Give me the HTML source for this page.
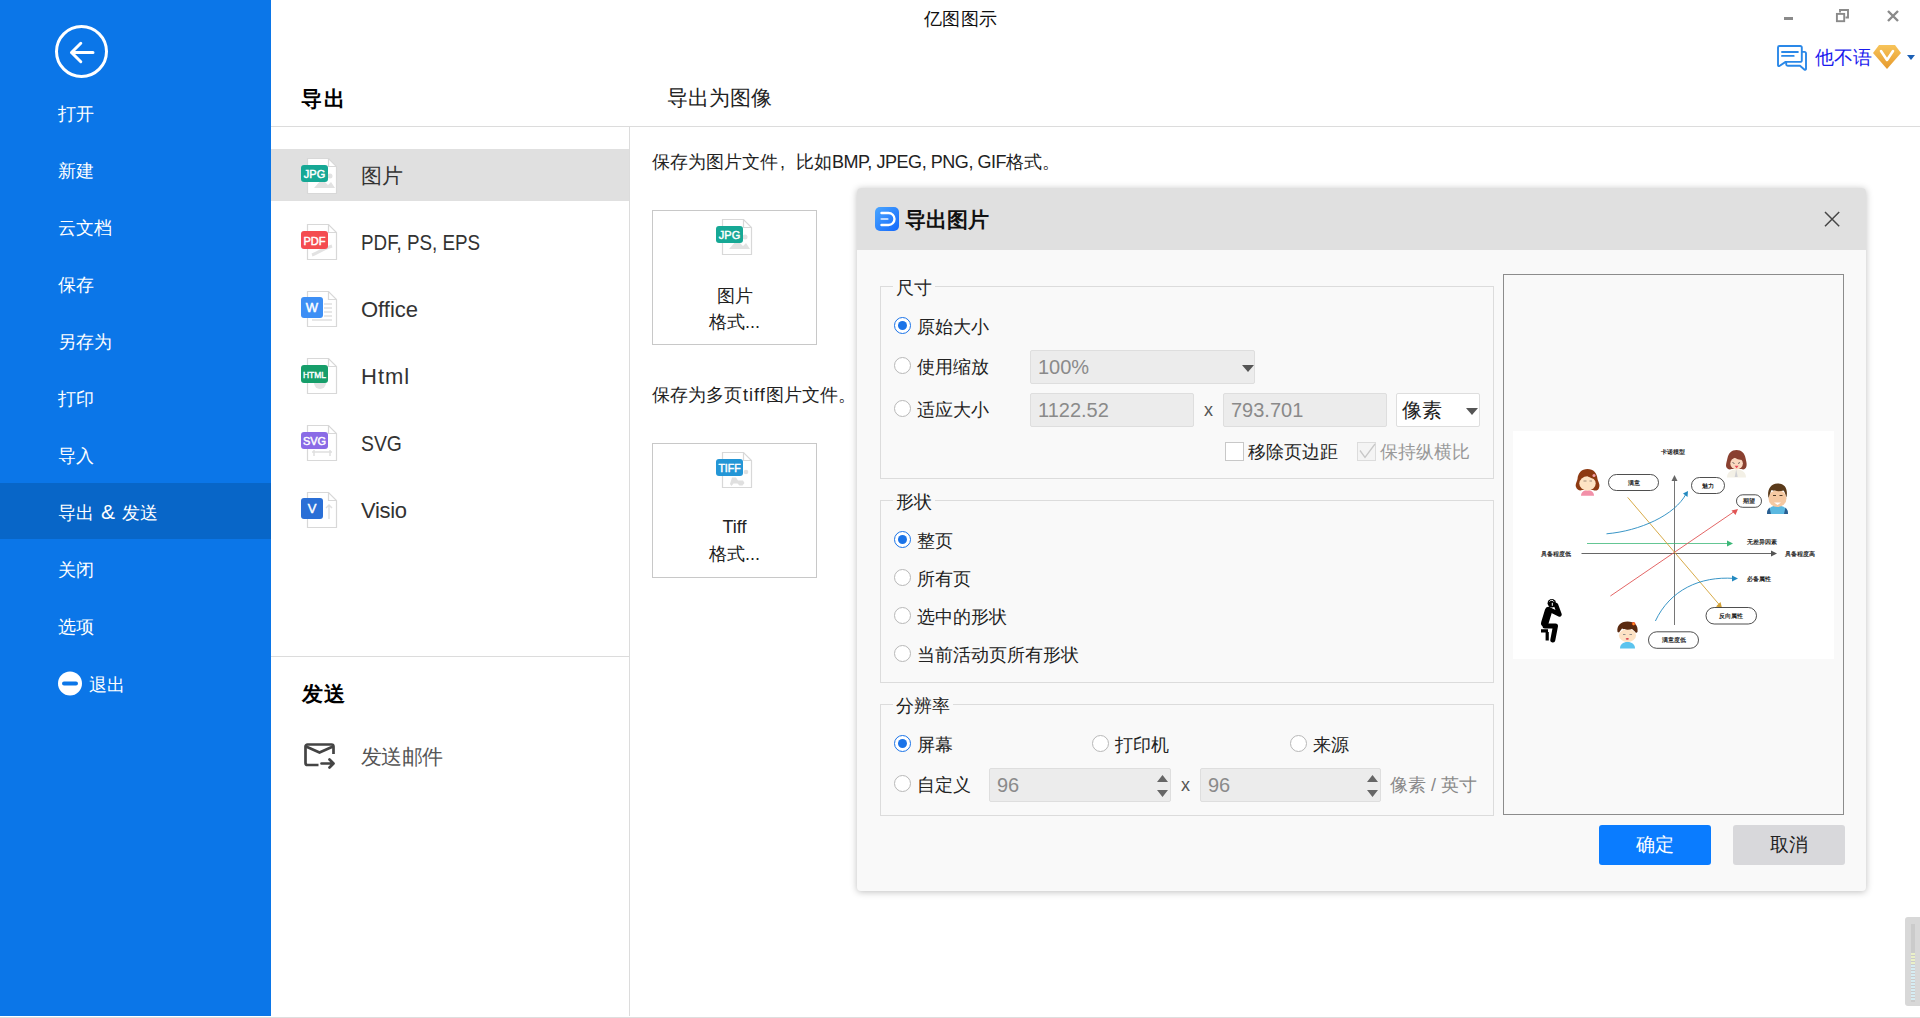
<!DOCTYPE html>
<html><head><meta charset="utf-8">
<style>
*{margin:0;padding:0;box-sizing:border-box}
html,body{width:1920px;height:1018px;overflow:hidden;background:#fff;font-family:"Liberation Sans",sans-serif;color:#222}
.a{position:absolute;white-space:nowrap}
#side{position:absolute;left:0;top:0;width:271px;height:1016px;background:#0b76e8}
.mi{position:absolute;left:58px;color:#fff;font-size:18px;line-height:24px;white-space:nowrap}
#hl{position:absolute;left:0;top:483px;width:271px;height:56px;background:#0866c8}
.hline{position:absolute;height:1px;background:#dcdcdc}
.vline{position:absolute;width:1px;background:#dcdcdc}
.li{position:absolute;left:361px;font-size:21px;line-height:28px;color:#333}
.box{position:absolute;border:1px solid #c8c8c8;background:#fff}
.dlg{position:absolute;left:857px;top:188px;width:1009px;height:703px;background:#f9f9f9;border-radius:4px;box-shadow:0 1px 7px rgba(0,0,0,.26);overflow:hidden}
.dhead{position:absolute;left:0;top:0;width:100%;height:62px;background:#e0e0e0}
.grp{position:absolute;border:1px solid #dcdcdc}
.glab{position:absolute;background:#f9f9f9;font-size:18px;line-height:22px;padding:0 3px;color:#222}
.t{position:absolute;white-space:nowrap;font-size:18px;line-height:22px;color:#222}
.rad{position:absolute;width:17px;height:17px;border-radius:50%;border:1px solid #b8b8b8;background:#fff}
.rad.on{border:1.5px solid #1a73e8}
.rad.on::after{content:"";position:absolute;left:2.5px;top:2.5px;width:9px;height:9px;border-radius:50%;background:#1a73e8}
.inp{position:absolute;background:#ececec;border:1px solid #dedede;border-radius:2px;font-size:20px;line-height:33px;color:#8a8a8a;padding-left:7px}
.btn{position:absolute;border-radius:3px;font-size:19px;text-align:center;line-height:40px}
</style></head><body>
<!-- sidebar -->
<div id="side">
  <svg class="a" style="left:54px;top:24px" width="56" height="56" viewBox="0 0 56 56">
    <circle cx="27.5" cy="27.5" r="25" fill="none" stroke="#fff" stroke-width="3"/>
    <path d="M17.5 28.5h21.5M26.8 19.3l-9.3 9.2 9.3 9.2" fill="none" stroke="#fff" stroke-width="3" stroke-linecap="round" stroke-linejoin="round"/>
  </svg>
  <div id="hl"></div>
  <div class="mi" style="top:102px">打开</div>
  <div class="mi" style="top:159px">新建</div>
  <div class="mi" style="top:216px">云文档</div>
  <div class="mi" style="top:273px">保存</div>
  <div class="mi" style="top:330px">另存为</div>
  <div class="mi" style="top:387px">打印</div>
  <div class="mi" style="top:444px">导入</div>
  <div class="mi" style="top:501px;word-spacing:2px">导出 <span style="font-size:21px;line-height:20px">&amp;</span> 发送</div>
  <div class="mi" style="top:558px">关闭</div>
  <div class="mi" style="top:615px">选项</div>
  <svg class="a" style="left:57px;top:671px" width="26" height="26" viewBox="0 0 26 26"><circle cx="13" cy="12.5" r="12" fill="#fff"/><rect x="5" y="10.5" width="16" height="4" rx="2" fill="#0b76e8"/></svg>
  <div class="mi" style="top:673px;left:89px">退出</div>
</div>
<div class="a" style="left:0;top:1017px;width:1920px;height:1px;background:#dedede"></div>

<!-- title bar -->
<div class="a" style="left:924px;top:8px;font-size:18px;line-height:22px;color:#111;letter-spacing:0.4px">亿图图示</div>
<div class="a" style="left:1784px;top:17px;width:9px;height:3px;background:#8a8a8a"></div>
<svg class="a" style="left:1834px;top:7px" width="16" height="17" viewBox="0 0 16 17"><path d="M6 5.5V3h8v7.5h-2.5" fill="none" stroke="#8a8a8a" stroke-width="1.9"/><rect x="2.9" y="6.9" width="7.3" height="7.3" fill="#fff" stroke="#8a8a8a" stroke-width="1.9"/></svg>
<svg class="a" style="left:1886px;top:9px" width="14" height="14" viewBox="0 0 14 14"><path d="M2 2l10 10M12 2L2 12" stroke="#8a8a8a" stroke-width="2.4"/></svg>

<!-- user -->
<svg class="a" style="left:1776px;top:44px" width="33" height="29" viewBox="0 0 33 29"><g fill="none" stroke="#2a88e8" stroke-width="1.9" stroke-linecap="round" stroke-linejoin="round"><path d="M25.8 16.4V3.5A1.5 1.5 0 0 0 24.3 2H3.5A1.5 1.5 0 0 0 2 3.5V21.3a0.9 0.9 0 0 0 1.4 0.7L9.6 17.9H24.3a1.5 1.5 0 0 0 1.5-1.5z"/><path d="M6 8h15.9M6 11.9h11.7"/><path d="M26 7.9h2.5A1.5 1.5 0 0 1 30 9.4V25a0.9 0.9 0 0 1-1.4 0.7L24 21.8H11.7a1.5 1.5 0 0 1-1.5-1.5V18.3"/></g></svg>
<div class="a" style="left:1815px;top:47px;font-size:19px;line-height:22px;color:#1a1aee">他不语</div>
<svg class="a" style="left:1872px;top:44px" width="30" height="26" viewBox="0 0 30 26"><defs><linearGradient id="gd" x1="0" y1="0" x2="0" y2="1"><stop offset="0" stop-color="#f7c45a"/><stop offset="1" stop-color="#e6992c"/></linearGradient></defs><path d="M7 1h16l6 8-14 16L1 9z" fill="url(#gd)"/><path d="M9 7l6 9 6-9" fill="none" stroke="#fff" stroke-width="2.6" stroke-linecap="round" stroke-linejoin="round"/></svg>
<svg class="a" style="left:1907px;top:55px" width="8" height="5" viewBox="0 0 8 5"><path d="M0 0h8L4 5z" fill="#1b5fb5"/></svg>

<!-- export header -->
<div class="a" style="left:301px;top:86px;font-size:21px;line-height:26px;font-weight:bold;color:#000;letter-spacing:1.5px">导出</div>
<div class="a" style="left:667px;top:85px;font-size:21px;line-height:26px;color:#222">导出为图像</div>
<div class="hline" style="left:271px;top:126px;width:1649px"></div>
<div class="vline" style="left:629px;top:127px;height:889px"></div>
<div class="a" style="left:271px;top:149px;width:358px;height:52px;background:#e0e0e0"></div>
<div class="hline" style="left:271px;top:656px;width:358px"></div>
<!-- file list -->
<svg class="a" style="left:300px;top:157px" width="40" height="40" viewBox="0 0 40 40"><path d="M7.5 1.5h21l8 8v27h-29z" fill="#fff" stroke="#d8d8d8" stroke-width="1.2"/><path d="M28.5 1.5v8h8" fill="none" stroke="#d8d8d8" stroke-width="1.2"/><path d="M14 31l8-9 6 6 3-3 4 6z" fill="#e2e2e2"/><circle cx="30" cy="19" r="2.5" fill="#e2e2e2"/><rect x="1" y="8" width="27" height="17" rx="3" fill="#16a895"/><text x="14.5" y="21" font-size="11" font-family="Liberation Sans" fill="#fff" stroke="#fff" stroke-width="0.45" text-anchor="middle">JPG</text></svg>
<div class="li" style="top:162px">图片</div>

<svg class="a" style="left:300px;top:223px" width="40" height="40" viewBox="0 0 40 40"><path d="M7.5 1.5h21l8 8v27h-29z" fill="#fff" stroke="#d8d8d8" stroke-width="1.2"/><path d="M28.5 1.5v8h8" fill="none" stroke="#d8d8d8" stroke-width="1.2"/><path d="M12 32c6-2 10-6 20-9" fill="none" stroke="#e2e2e2" stroke-width="3"/><rect x="1" y="8" width="27" height="18" rx="3" fill="#f44c50"/><text x="14.5" y="21.5" font-size="11" font-family="Liberation Sans" fill="#fff" stroke="#fff" stroke-width="0.45" text-anchor="middle">PDF</text></svg>
<div class="li" style="top:229px;font-size:22px;transform:scaleX(.855);transform-origin:0 0">PDF, PS, EPS</div>

<svg class="a" style="left:300px;top:290px" width="40" height="40" viewBox="0 0 40 40"><path d="M7.5 1.5h21l8 8v27h-29z" fill="#fff" stroke="#d8d8d8" stroke-width="1.2"/><path d="M28.5 1.5v8h8" fill="none" stroke="#d8d8d8" stroke-width="1.2"/><path d="M24 14h8M24 18h8M24 22h8M24 26h8M12 30h20" stroke="#e0e0e0" stroke-width="1.5"/><rect x="1" y="7" width="22" height="21" rx="3" fill="#3d8ff5"/><text x="12" y="22" font-size="13" font-family="Liberation Sans" fill="#fff" stroke="#fff" stroke-width="0.45" text-anchor="middle">W</text></svg>
<div class="li" style="top:296px;font-size:22px">Office</div>

<svg class="a" style="left:300px;top:357px" width="40" height="40" viewBox="0 0 40 40"><path d="M7.5 1.5h21l8 8v27h-29z" fill="#fff" stroke="#d8d8d8" stroke-width="1.2"/><path d="M28.5 1.5v8h8" fill="none" stroke="#d8d8d8" stroke-width="1.2"/><circle cx="20" cy="26" r="6" fill="#e4e4e4"/><rect x="1" y="8" width="27" height="18" rx="3" fill="#169e6a"/><text x="14.5" y="20.5" font-size="9.5" font-family="Liberation Sans" fill="#fff" stroke="#fff" stroke-width="0.45" text-anchor="middle" textLength="23" lengthAdjust="spacingAndGlyphs">HTML</text></svg>
<div class="li" style="top:363px;font-size:22px;letter-spacing:1px">Html</div>

<svg class="a" style="left:300px;top:424px" width="40" height="40" viewBox="0 0 40 40"><path d="M7.5 1.5h21l8 8v27h-29z" fill="#fff" stroke="#d8d8d8" stroke-width="1.2"/><path d="M28.5 1.5v8h8" fill="none" stroke="#d8d8d8" stroke-width="1.2"/><path d="M12 28h20M14 26v6M30 26v6" stroke="#e0e0e0" stroke-width="1.5"/><rect x="1" y="8" width="27" height="17" rx="3" fill="#8a6be6"/><text x="14.5" y="20.5" font-size="11" font-family="Liberation Sans" fill="#fff" stroke="#fff" stroke-width="0.45" text-anchor="middle">SVG</text></svg>
<div class="li" style="top:430px;font-size:22px;transform:scaleX(.88);transform-origin:0 0">SVG</div>

<svg class="a" style="left:300px;top:491px" width="40" height="40" viewBox="0 0 40 40"><path d="M7.5 1.5h21l8 8v27h-29z" fill="#fff" stroke="#d8d8d8" stroke-width="1.2"/><path d="M28.5 1.5v8h8" fill="none" stroke="#d8d8d8" stroke-width="1.2"/><path d="M29 14v14M26 17l3-3 3 3" fill="none" stroke="#e0e0e0" stroke-width="1.5"/><rect x="1" y="7" width="22" height="21" rx="3" fill="#2a6fd6"/><text x="12" y="22" font-size="13" font-family="Liberation Sans" fill="#fff" stroke="#fff" stroke-width="0.45" text-anchor="middle">V</text></svg>
<div class="li" style="top:497px;font-size:22px;letter-spacing:-0.3px">Visio</div>

<div class="a" style="left:302px;top:681px;font-size:21px;line-height:26px;font-weight:bold;color:#000;letter-spacing:0.5px">发送</div>
<svg class="a" style="left:302px;top:741px" width="36" height="30" viewBox="0 0 36 30"><path d="M16.5 24H5.5a2 2 0 0 1-2-2V5.5a2 2 0 0 1 2-2h24a2 2 0 0 1 2 2V13" fill="none" stroke="#444" stroke-width="2.7"/><path d="M4 5.5l13.5 6 13.5-6" fill="none" stroke="#444" stroke-width="2.7"/><path d="M19.5 22.5H31M27.5 18.5l4 4-4 4" fill="none" stroke="#444" stroke-width="2.7" stroke-linecap="round" stroke-linejoin="round"/></svg>
<div class="li" style="top:743px;color:#555;letter-spacing:-0.7px">发送邮件</div>

<!-- right content -->
<div class="a" style="left:652px;top:151px;font-size:18px;line-height:22px;color:#222">保存为图片文件<span style="display:inline-block;width:18px;padding-left:2px">,</span>比如<span style="letter-spacing:-0.45px">BMP, JPEG, PNG, GIF</span>格式。</div>
<div class="box" style="left:652px;top:210px;width:165px;height:135px">
  <svg class="a" style="left:62px;top:7px" width="40" height="40" viewBox="0 0 40 40"><path d="M7.5 1.5h21l8 8v27h-29z" fill="#fff" stroke="#d8d8d8" stroke-width="1.2"/><path d="M28.5 1.5v8h8" fill="none" stroke="#d8d8d8" stroke-width="1.2"/><path d="M14 31l8-9 6 6 3-3 4 6z" fill="#e2e2e2"/><circle cx="30" cy="19" r="2.5" fill="#e2e2e2"/><rect x="1" y="8" width="27" height="17" rx="3" fill="#16a895"/><text x="14.5" y="21" font-size="11" font-family="Liberation Sans" fill="#fff" stroke="#fff" stroke-width="0.45" text-anchor="middle">JPG</text></svg>
  <div class="a" style="left:0;width:163px;top:72px;text-align:center;font-size:18px;line-height:26px;color:#222;white-space:normal">图片<br>格式...</div>
</div>
<div class="a" style="left:652px;top:384px;font-size:18px;line-height:22px;color:#222">保存为多页<span style="letter-spacing:1px;padding-left:1px">tiff</span>图片文件。</div>
<div class="box" style="left:652px;top:443px;width:165px;height:135px">
  <svg class="a" style="left:62px;top:7px" width="40" height="40" viewBox="0 0 40 40"><path d="M7.5 1.5h21l8 8v27h-29z" fill="#fff" stroke="#d8d8d8" stroke-width="1.2"/><path d="M28.5 1.5v8h8" fill="none" stroke="#d8d8d8" stroke-width="1.2"/><path d="M17 26.5h4l2 3h5l1.5 2.5-2 2.5h-3l-2-2h-4l-2 2.5-1.5-2z" fill="#e0e0e0"/><circle cx="31" cy="21" r="2.3" fill="#e0e0e0"/><rect x="1" y="8" width="27" height="17" rx="3" fill="#2496d6"/><text x="14.5" y="21" font-size="10.5" font-family="Liberation Sans" fill="#fff" stroke="#fff" stroke-width="0.45" text-anchor="middle">TIFF</text></svg>
  <div class="a" style="left:0;width:163px;top:70px;text-align:center;font-size:18px;line-height:27px;color:#222;white-space:normal">Tiff<br>格式...</div>
</div>
<!-- dialog -->
<div class="dlg">
  <div class="dhead"></div>
  <svg class="a" style="left:18px;top:19px" width="24" height="24" viewBox="0 0 24 24"><defs><linearGradient id="gi" x1="0" y1="0" x2="1" y2="1"><stop offset="0" stop-color="#4aa6ff"/><stop offset="1" stop-color="#1468fb"/></linearGradient></defs><rect width="24" height="24" rx="5" fill="url(#gi)"/><path d="M6.5 6h7a6 6 0 0 1 0 12h-7" fill="none" stroke="#fff" stroke-width="2.4" stroke-linecap="round"/><path d="M6.5 12h6" stroke="#bcd9ff" stroke-width="2.2" stroke-linecap="round"/></svg>
  <div class="a" style="left:48px;top:19px;font-size:21px;line-height:26px;font-weight:bold;color:#111">导出图片</div>
  <svg class="a" style="left:966px;top:22px" width="18" height="18" viewBox="0 0 18 18"><path d="M2 2l14.2 14.2M16.2 2L2 16.2" stroke="#474747" stroke-width="1.5"/></svg>

  <div class="grp" style="left:23px;top:98px;width:614px;height:193px"></div>
  <div class="glab" style="left:36px;top:89px">尺寸</div>
  <div class="rad on" style="left:37px;top:129px"></div><div class="t" style="left:60px;top:128px">原始大小</div>
  <div class="rad" style="left:37px;top:169px"></div><div class="t" style="left:60px;top:168px">使用缩放</div>
  <div class="rad" style="left:37px;top:212px"></div><div class="t" style="left:60px;top:211px">适应大小</div>
  <div class="inp" style="left:173px;top:162px;width:225px;height:34px">100%<svg class="a" style="left:211px;top:14px" width="12" height="7" viewBox="0 0 12 7"><path d="M0 0h12L6 7z" fill="#555"/></svg></div>
  <div class="inp" style="left:173px;top:205px;width:164px;height:34px">1122.52</div>
  <div class="t" style="left:347px;top:211px;color:#555">x</div>
  <div class="inp" style="left:366px;top:205px;width:164px;height:34px">793.701</div>
  <div class="inp" style="left:539px;top:205px;width:84px;height:34px;background:#fff;color:#222;padding-left:5px">像素<svg class="a" style="left:69px;top:14px" width="12" height="7" viewBox="0 0 12 7"><path d="M0 0h12L6 7z" fill="#555"/></svg></div>
  <div class="a" style="left:368px;top:254px;width:19px;height:19px;border:1px solid #c8c8c8;background:#fff"></div>
  <div class="t" style="left:391px;top:253px">移除页边距</div>
  <div class="a" style="left:500px;top:254px;width:19px;height:19px;border:1px solid #dcdcdc;background:#f4f4f4"><svg class="a" style="left:0;top:0" width="18" height="18" viewBox="0 0 18 18"><path d="M2 7.5L7 14.5L17 1" fill="none" stroke="#c8c8c8" stroke-width="1.3"/></svg></div>
  <div class="t" style="left:523px;top:253px;color:#999">保持纵横比</div>

  <div class="grp" style="left:23px;top:312px;width:614px;height:183px"></div>
  <div class="glab" style="left:36px;top:303px">形状</div>
  <div class="rad on" style="left:37px;top:343px"></div><div class="t" style="left:60px;top:342px">整页</div>
  <div class="rad" style="left:37px;top:381px"></div><div class="t" style="left:60px;top:380px">所有页</div>
  <div class="rad" style="left:37px;top:419px"></div><div class="t" style="left:60px;top:418px">选中的形状</div>
  <div class="rad" style="left:37px;top:457px"></div><div class="t" style="left:60px;top:456px">当前活动页所有形状</div>

  <div class="grp" style="left:23px;top:516px;width:614px;height:112px"></div>
  <div class="glab" style="left:36px;top:507px">分辨率</div>
  <div class="rad on" style="left:37px;top:547px"></div><div class="t" style="left:60px;top:546px">屏幕</div>
  <div class="rad" style="left:235px;top:547px"></div><div class="t" style="left:258px;top:546px">打印机</div>
  <div class="rad" style="left:433px;top:547px"></div><div class="t" style="left:456px;top:546px">来源</div>
  <div class="rad" style="left:37px;top:587px"></div><div class="t" style="left:60px;top:586px">自定义</div>
  <div class="inp" style="left:132px;top:580px;width:182px;height:34px">96<svg class="a" style="left:166px;top:5px" width="13" height="24" viewBox="0 0 13 24"><path d="M1 8L6.5 1 12 8z M1 16l5.5 7 5.5-7z" fill="#666"/></svg></div>
  <div class="t" style="left:324px;top:586px;color:#555">x</div>
  <div class="inp" style="left:343px;top:580px;width:181px;height:34px">96<svg class="a" style="left:165px;top:5px" width="13" height="24" viewBox="0 0 13 24"><path d="M1 8L6.5 1 12 8z M1 16l5.5 7 5.5-7z" fill="#666"/></svg></div>
  <div class="t" style="left:533px;top:586px;color:#888">像素 / 英寸</div>

  <div class="a" style="left:646px;top:86px;width:341px;height:541px;border:1px solid #8c8c8c"></div>
  <div id="prev" class="a" style="left:656px;top:243px;width:321px;height:228px;background:#fff"></div>

  <div class="btn" style="left:742px;top:637px;width:112px;height:40px;background:#0a7cff;color:#fff">确定</div>
  <div class="btn" style="left:876px;top:637px;width:112px;height:40px;background:#d8d8db;color:#222">取消</div>
</div>

<!-- preview -->
<svg class="a" style="left:1510px;top:430px" width="330" height="235" viewBox="0 0 330 235" font-family="Liberation Sans">
<defs>
<marker id="mk" viewBox="0 0 6 6" refX="5" refY="3" markerWidth="5" markerHeight="5" orient="auto"><path d="M0 0L6 3 0 6z" fill="context-stroke"/></marker>
</defs>
<g font-size="6" font-weight="bold" fill="#222">
<text x="151" y="24">卡诺模型</text>
<text x="31" y="126">具备程度低</text>
<text x="275" y="126">具备程度高</text>
<text x="237" y="114">无差异因素</text>
<text x="237" y="151">必备属性</text>
</g>
<path d="M164.5 195V46" stroke="#666" stroke-width="0.9" fill="none"/><path d="M161.5 51l3-6 3 6z" fill="#666"/>
<path d="M71.5 123.5H265" stroke="#555" stroke-width="0.9" fill="none"/><path d="M261 120.5l6 3-6 3z" fill="#555"/>
<path d="M77 113.5H219" stroke="#3cb878" stroke-width="0.8" fill="none"/><path d="M217 110.5l6 3-6 3z" fill="#3cb878"/>
<path d="M100.4 166L225 81" stroke="#e05555" stroke-width="0.9" fill="none"/><path d="M221.5 80.5l6.5-1.5-2.5 6z" fill="#e05555"/>
<path d="M117.7 67.4L210 175.5" stroke="#d2a033" stroke-width="0.9" fill="none"/><path d="M206 176.5l6 1.5-1.5-6z" fill="#d2a033"/>
<path d="M96.5 103.8C130 101 165 85 176 64" stroke="#2389c0" stroke-width="0.9" fill="none"/><path d="M173 63.5l5-2.5-0.5 6z" fill="#2389c0"/>
<path d="M145.4 191C160 160 190 146 224 148.4" stroke="#2389c0" stroke-width="0.9" fill="none"/><path d="M222 145.5l6 3-6 3z" fill="#2389c0"/>
<g fill="#fff" stroke="#222" stroke-width="0.8">
<rect x="98.5" y="44.5" width="50" height="16" rx="8"/>
<rect x="181.5" y="47.5" width="33" height="16" rx="8"/>
<rect x="226.5" y="64.8" width="25" height="12.5" rx="6.2"/>
<rect x="196" y="177.5" width="50.5" height="16.5" rx="8.2"/>
<rect x="138.5" y="201.8" width="50" height="16.5" rx="8.2"/>
</g>
<g font-size="5.5" font-weight="bold" fill="#222" text-anchor="middle">
<text x="123.5" y="54.5">满意</text>
<text x="198" y="57.5">魅力</text>
<text x="239" y="73">期望</text>
<text x="221" y="188">反向属性</text>
<text x="163.5" y="212">满意度低</text>
</g>
<!-- girl left -->
<g>
<path d="M66 57c-1-3 1-5 1.5-8 0.5-6 4-10 10-10s9.5 4 10 10c0.5 3 3 5 1.5 9-1 3-4 3-6 2l-11 0c-2 1-5 0-6-3z" fill="#8e3a12"/>
<path d="M71 65.8c0-3.5 2.5-5.5 6.5-5.5s6.5 2 6.5 5.5z" fill="#f290a8"/>
<ellipse cx="77.5" cy="53.5" rx="8.2" ry="7.2" fill="#fde3c4"/>
<path d="M69 50c1.5-6 5-9 9-9s7 3 8.5 8c-4 0-9-2-12-6c-1 3-3 5-5.5 7z" fill="#8e3a12"/>
<circle cx="84" cy="45.5" r="1.5" fill="#f5a0a8"/>
<path d="M73.5 51h3M79.5 51h2.5" stroke="#8a7a6a" stroke-width="0.8"/>
</g>
<!-- woman top right -->
<g>
<path d="M217 47.4c0-5 3.5-8 9.5-8s9.5 3 9.5 8z" fill="#f3f0e6"/>
<path d="M226.2 39.5l-1.5 7.5h3z" fill="#d0d0d4"/>
<path d="M216 36c0-3 1-5 1.5-8 1-5 4-8 9-8s8 3 9 8c0.5 3 1.5 5 1 8-0.5 3-3 4-5 3h-10c-2 1-5 0-5.5-3z" fill="#8a4030"/>
<ellipse cx="226.6" cy="33.5" rx="6.3" ry="6" fill="#fbd8c0"/>
<path d="M220.5 30.5c1.5-4 4-5.5 6.5-5.5s5 1.5 6 5c-4 0-7-1-9-3z" fill="#8a4030"/>
<path d="M222.5 32.5l2 1M230 32.5l-2 1" stroke="#333" stroke-width="0.7"/>
<path d="M224.6 35.8h4l-2 2.4z" fill="#e8485a"/>
</g>
<!-- man right -->
<g>
<path d="M257 83.9c0-5 4-8.5 10.5-8.5s10.5 3.5 10.5 8.5z" fill="#5bb8e0"/>
<path d="M257 83.9c0-3 1-5 2.5-6.5l1.5 6.5zM278 83.9c0-3-1-5-2.5-6.5l-1.5 6.5z" fill="#2a5d90"/>
<ellipse cx="267.5" cy="68.5" rx="9" ry="8.6" fill="#f6c9a2"/>
<path d="M258.5 68c-1.5-7 1-14 9-14.5 8 0 10.5 6 9 14-1-3-2-6-3-7-3 1-8 1-12-0.5-1 2-2 5-3 8z" fill="#5a3a1a"/>
<path d="M263 65.5h3M269.5 65.5h3" stroke="#3a2a1a" stroke-width="0.9"/>
<path d="M264 72.5h7l-3.5 2.5z" fill="#fff"/>
</g>
<!-- child bottom -->
<g>
<path d="M110 218.5c0-4 3-6.5 7.5-6.5s7.5 2.5 7.5 6.5z" fill="#5cc4ee"/>
<ellipse cx="117.5" cy="205.5" rx="8.6" ry="6.4" fill="#fde2c4"/>
<path d="M107.5 202c-1-6 3-10.5 10-10.5s11 4 10 10.5l-1.5 1c-1-2-3-3-4-4-3 1-7 1-10-0.5-1 1-2 3-3 4z" fill="#5a2a10"/>
<circle cx="123.6" cy="193.8" r="1.8" fill="#f04a20"/>
<circle cx="123.6" cy="194" r="0.8" fill="#ffd020"/>
<path d="M113 204.5h2.5M119.5 204.5h2.5" stroke="#888" stroke-width="0.9"/>
<ellipse cx="117.3" cy="208.8" rx="1.6" ry="0.9" fill="#d84050"/>
</g>
<!-- thinking figure -->
<g stroke="#000" stroke-linecap="round" stroke-linejoin="round" fill="none">
<path d="M38.6 180.5L34.8 193" stroke-width="7.5"/>
<path d="M41.5 180.5L49.5 184.5L46 175" stroke-width="4.5"/>
<path d="M35 196H45.5L42.8 210" stroke-width="5"/>
<path d="M31 200.8H38M37.2 202V210.5" stroke-width="3.2" stroke-linecap="butt"/>
</g>
<circle cx="41.8" cy="173.3" r="4.2" fill="#000"/>
<path d="M39.5 171.5c1.2-1.6 3.4-1.6 4.4 0.2M42.3 172.8v3" stroke="#fff" stroke-width="1" fill="none"/>
</svg>
<!-- scroll widget -->
<div class="a" style="left:1905px;top:917px;width:15px;height:89px;background:#d8d8d8;border-radius:3px 0 0 3px"></div>
<div class="a" style="left:1911px;top:924px;width:4px;height:78px;background:#cbcbcb"></div><div class="a" style="left:1911px;top:953px;width:4px;height:48px;background:repeating-linear-gradient(#d6ecf2 0 2px,#cbcbcb 2px 3px)"></div><div class="a" style="left:1911px;top:953px;width:4px;height:12px;background:repeating-linear-gradient(#eaf0c8 0 2px,#cbcbcb 2px 3px)"></div>
</body></html>
